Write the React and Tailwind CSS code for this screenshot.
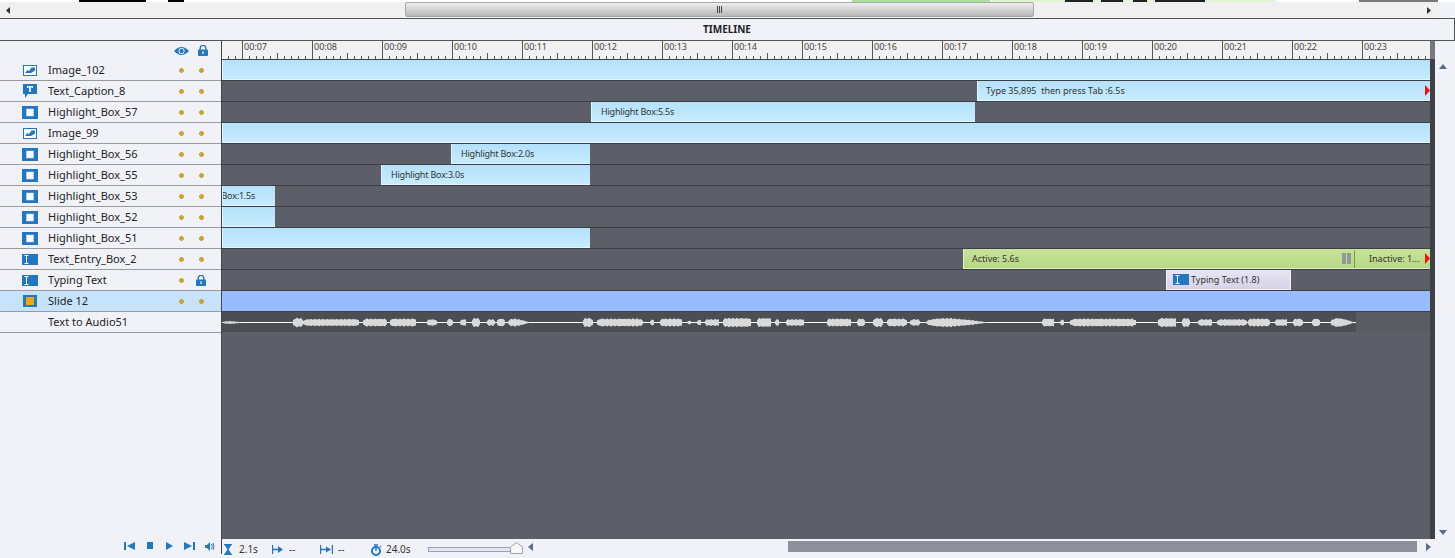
import React from 'react';

const BLUE = '#2277c2';

const LAYERS = [
  { name: 'Image_102', icon: 'image' },
  { name: 'Text_Caption_8', icon: 'caption' },
  { name: 'Highlight_Box_57', icon: 'box' },
  { name: 'Image_99', icon: 'image' },
  { name: 'Highlight_Box_56', icon: 'box' },
  { name: 'Highlight_Box_55', icon: 'box' },
  { name: 'Highlight_Box_53', icon: 'box' },
  { name: 'Highlight_Box_52', icon: 'box' },
  { name: 'Highlight_Box_51', icon: 'box' },
  { name: 'Text_Entry_Box_2', icon: 'entry' },
  { name: 'Typing Text', icon: 'entry', locked: true },
  { name: 'Slide 12', icon: 'slide', selected: true },
];

const BAR = 'relative h-[20px] shrink-0 overflow-hidden whitespace-nowrap border-l border-b border-[#e4f5ff] bg-gradient-to-b from-[#b4e1fa] to-[#c6ebfe] text-[9px] leading-[19px] text-[#333]';

// [start, end, half height] in px from the left of the audio clip
const WAVE = [
  [0, 21, 1.5, 1], [71, 81, 5], [81, 138, 3.8], [141, 165, 4.2], [168, 195, 4.2], [205, 215, 3.5], [225, 231, 4],
  [238, 245, 3.5], [250, 258, 4.8], [265, 273, 3.6], [275, 283, 4.2], [285, 308, 4.2, 1], [361, 371, 4.8], [375, 421, 4.2],
  [428, 433, 3], [438, 461, 4.2], [465, 470, 1.8], [475, 480, 3], [483, 498, 3.6], [501, 530, 4.8], [535, 550, 4.8],
  [553, 558, 3.6], [564, 583, 3.6], [605, 630, 4.2], [635, 643, 4.2], [651, 661, 4.8], [665, 685, 4.2], [688, 698, 3.6],
  [703, 768, 4.8, 1], [820, 833, 4.2], [838, 843, 3], [848, 915, 4.2], [936, 955, 4.8], [960, 968, 4.8], [976, 991, 3.6],
  [995, 1025, 3.6], [1026, 1048, 4.2], [1053, 1066, 3.6], [1071, 1081, 4.2], [1090, 1098, 4.2], [1108, 1133, 4.8, 1],
];

function wavePath() {
  return WAVE.map(([a, b, h, taper]) => {
    const top = [];
    const bottom = [];
    for (let x = a; x <= b; x += 2) {
      const t = (x - a) / (b - a);
      const edge = taper ? Math.sin(Math.PI * Math.pow(t, 0.6)) : Math.min(1, Math.min(t, 1 - t) * 8 + 0.5);
      const r = h * edge * (0.85 + 0.15 * Math.sin(x * 1.7));
      top.push(`${x},${(10.5 - r).toFixed(1)}`);
      bottom.unshift(`${x},${(10.5 + r).toFixed(1)}`);
    }
    return `M${top.join(' L')} L${bottom.join(' L')} Z`;
  }).join(' ');
}

function LayerIcon({ type }) {
  if (type === 'image') {
    return (
      <svg width="14" height="11" viewBox="0 0 14 11">
        <rect width="14" height="11" fill={BLUE} />
        <rect x="1" y="1" width="12" height="9" fill="#fff" />
        <path d="M2 8 L4.5 5 L6 6 L8.5 2.5 L12 2.5 V5.5 L8 8 Z" fill={BLUE} />
      </svg>
    );
  }
  if (type === 'caption') {
    return (
      <svg width="14" height="14" viewBox="0 0 14 14">
        <path d="M0 0 H14 V10 H5 L2 14 V10 H0 Z" fill={BLUE} />
        <path d="M4 2 H10 V4 H9 V3.4 H7.8 V8 H6.2 V3.4 H5 V4 H4 Z" fill="#fff" />
      </svg>
    );
  }
  if (type === 'box') {
    return (
      <svg width="16" height="13" viewBox="0 0 16 13">
        <rect width="16" height="13" fill={BLUE} />
        <rect x="4.5" y="3" width="7" height="7" fill="#fff" stroke="#cfe3f5" strokeDasharray="1 1" />
      </svg>
    );
  }
  if (type === 'entry') {
    return (
      <svg width="16" height="11" viewBox="0 0 16 11">
        <rect width="16" height="11" fill={BLUE} />
        <path d="M2.5 1.5 H6.5 M2.5 9.5 H6.5 M4.5 1.5 V9.5" stroke="#fff" strokeWidth="1" fill="none" />
      </svg>
    );
  }
  return (
    <svg width="14" height="12" viewBox="0 0 14 12">
      <rect width="14" height="12" fill={BLUE} />
      <rect x="3" y="2" width="8" height="8" fill="#eaa80c" />
    </svg>
  );
}

function Lock({ className = '' }) {
  return (
    <svg width="10" height="11" viewBox="0 0 10 11" className={className}>
      <path d="M2.2 5 V3.2 a2.8 2.8 0 0 1 5.6 0 V5" fill="none" stroke={BLUE} strokeWidth="1.4" />
      <rect y="4.6" width="10" height="6.4" rx="1" fill={BLUE} />
      <rect x="4.4" y="6.4" width="1.2" height="2.6" fill="#fff" />
    </svg>
  );
}

function Dot() {
  return <span className="block h-[5px] w-[5px] rounded-full border border-[#b8a045] bg-[#d9a21b]" />;
}

function LayerRow({ layer }) {
  return (
    <div className={`flex h-[21px] shrink-0 items-center border-b border-[#9b9b9b] ${layer.selected ? 'bg-[#c5e3fb]' : ''}`}>
      <div className="flex w-[48px] shrink-0 pl-[22px]">
        <div className="flex w-[16px] justify-center">
          {layer.icon && <LayerIcon type={layer.icon} />}
        </div>
      </div>
      <span className="w-[131px] shrink-0 text-[11px] text-[#222]">{layer.name}</span>
      {layer.icon && (
        <div className="flex items-center">
          <Dot />
          <div className="flex w-[20px] shrink-0 justify-end">
            {layer.locked ? <Lock className="-mr-[2px]" /> : <Dot />}
          </div>
        </div>
      )}
    </div>
  );
}

function RulerSecond({ label, width = 'w-[70px]' }) {
  return (
    <div className={`relative h-[18px] shrink-0 overflow-hidden ${width}`}>
      <svg width="70" height="18" className="absolute bottom-0 right-0">
        <path
          d="M.5 0 V18 M7.5 15 V18 M14.5 15 V18 M21.5 15 V18 M28.5 15 V18 M35.5 12 V18 M42.5 15 V18 M49.5 15 V18 M56.5 15 V18 M63.5 15 V18"
          stroke="#555"
          strokeWidth="1"
        />
      </svg>
      {label && <span className="absolute left-[2px] top-0 text-[9px] leading-[12px] text-[#444]">{label}</span>}
    </div>
  );
}

function RedFlag() {
  return (
    <svg width="5" height="11" viewBox="0 0 5 11" className="absolute right-0 top-[4px]">
      <path d="M0 0 L5 5.5 L0 11 Z" fill="#f01010" />
    </svg>
  );
}

function Track({ children, dark }) {
  return <div className={`flex h-[21px] shrink-0 border-b ${dark ? 'border-[#5f6168]' : 'border-[#3d3f45]'}`}>{children}</div>;
}

function Timeline() {
  return (
    <div className="flex w-[1208px] shrink-0 flex-col overflow-hidden bg-[#5c5f67]">
      <div className="flex h-[19px] shrink-0 border-b border-[#444] bg-[#f1f1f2]">
        <RulerSecond width="w-[20px]" />
        {['00:07', '00:08', '00:09', '00:10', '00:11', '00:12', '00:13', '00:14', '00:15', '00:16', '00:17', '00:18', '00:19', '00:20', '00:21', '00:22', '00:23'].map((t) => (
          <RulerSecond key={t} label={t} />
        ))}
      </div>
      <Track><div className={`${BAR} w-full`} /></Track>
      <Track>
        <div className={`${BAR} ml-[755px] w-[453px] pl-[8px]`}>
          Type 35,895&nbsp; then press Tab :6.5s
          <RedFlag />
        </div>
      </Track>
      <Track><div className={`${BAR} ml-[369px] w-[384px] pl-[9px] tracking-[-0.2px]`}>Highlight Box:5.5s</div></Track>
      <Track><div className={`${BAR} w-full`} /></Track>
      <Track><div className={`${BAR} ml-[229px] w-[139px] pl-[9px] tracking-[-0.2px]`}>Highlight Box:2.0s</div></Track>
      <Track><div className={`${BAR} ml-[159px] w-[209px] pl-[9px] tracking-[-0.2px]`}>Highlight Box:3.0s</div></Track>
      <Track>
        <div className={`${BAR} w-[53px] tracking-[-0.2px]`}>
          <span className="-ml-[41px] block">Highlight Box:1.5s</span>
        </div>
      </Track>
      <Track><div className={`${BAR} w-[53px]`} /></Track>
      <Track><div className={`${BAR} w-[368px]`} /></Track>
      <Track>
        <div className="relative ml-[741px] flex h-[20px] w-[467px] shrink-0 items-center border-l border-b border-[#e3f0cf] bg-gradient-to-b from-[#c8e29b] to-[#b6d982] text-[9px] text-[#333]">
          <span className="w-[378px] shrink-0 pl-[8px]">Active: 5.6s</span>
          <span className="flex w-[9px] shrink-0 justify-between">
            <span className="h-[11px] w-[4px] bg-[#8f9a96]" />
            <span className="h-[11px] w-[4px] bg-[#8f9a96]" />
          </span>
          <span className="ml-[3px] mr-[14px] h-[18px] w-px shrink-0 bg-[#6f9a4f]" />
          <span>Inactive: 1...</span>
          <RedFlag />
        </div>
      </Track>
      <Track>
        <div className="ml-[944px] flex h-[20px] w-[125px] shrink-0 items-center border-x border-b border-[#f3f2fa] bg-gradient-to-b from-[#e8e6f4] to-[#d5d3e5] pl-[6px] text-[9px] text-[#333]">
          <span className="mr-[2px] flex"><LayerIcon type="entry" /></span>
          Typing Text (1.8)
        </div>
      </Track>
      <Track><div className="h-[20px] w-full bg-[#99bbff]" /></Track>
      <Track dark>
        <svg width="1134" height="20" viewBox="0 0 1134 20" className="shrink-0 bg-[#4c4e53]">
          <rect y="10" width="1134" height="1" fill="#fff" />
          <path d={wavePath()} fill="#d9d9d9" />
        </svg>
        <div className="mt-px h-[19px] flex-1 bg-[#5a5c62]" />
      </Track>
    </div>
  );
}

function TopScrollbar() {
  return (
    <div className="flex h-[16px] shrink-0 items-center">
      <div className="flex h-full w-[405px] shrink-0 items-center bg-[#f0f0f0] pl-[6px]">
        <svg width="4" height="7" viewBox="0 0 4 7"><path d="M4 0 L0 3.5 L4 7 Z" fill="#333" /></svg>
      </div>
      <div className="flex h-[15px] w-[629px] shrink-0 items-center justify-center self-start rounded-[2px] border border-[#a8a8a8] bg-gradient-to-b from-[#eeeeee] to-[#b9b9b9]">
        <span className="flex gap-[1px]">
          <span className="h-[7px] w-px bg-[#444]" />
          <span className="h-[7px] w-px bg-[#444]" />
          <span className="h-[7px] w-px bg-[#444]" />
        </span>
      </div>
      <div className="flex h-full w-[404px] shrink-0 items-center justify-end bg-[#f0f0f0] pr-[7px]">
        <svg width="4" height="7" viewBox="0 0 4 7"><path d="M0 0 L4 3.5 L0 7 Z" fill="#333" /></svg>
      </div>
    </div>
  );
}

function TopStrip() {
  return (
    <div className="flex h-[2px] shrink-0 bg-white">
      <div className="ml-[79px] w-[67px] bg-black" />
      <div className="ml-[22px] w-[16px] bg-black" />
      <div className="ml-[668px] w-[138px] bg-[#a9e39a]" />
      <div className="ml-[2px] flex w-[284px] bg-[#dff4d0] pl-[73px]">
        <span className="w-[28px] bg-[#222]" />
        <span className="ml-[8px] w-[22px] bg-[#222]" />
        <span className="ml-[10px] w-[14px] bg-[#222]" />
        <span className="ml-[8px] w-[50px] bg-[#222]" />
      </div>
      <div className="ml-[83px] w-[79px] bg-[#777]" />
    </div>
  );
}

function BottomBar() {
  return (
    <div className="flex h-[19px] shrink-0 items-start">
      <div className="flex h-[15px] w-[222px] shrink-0 items-start border-r border-[#444] pl-[124px] pt-[3px]">
        <svg width="11" height="8" viewBox="0 0 11 8" className="mr-[12px]"><path d="M0 0 H2 V8 H0 Z M11 0 V8 L3 4 Z" fill={BLUE} /></svg>
        <svg width="6" height="7" viewBox="0 0 6 7" className="mr-[13px]"><rect width="6" height="7" fill={BLUE} /></svg>
        <svg width="7" height="8" viewBox="0 0 7 8" className="mr-[11px]"><path d="M0 0 L7 4 L0 8 Z" fill={BLUE} /></svg>
        <svg width="11" height="8" viewBox="0 0 11 8" className="mr-[10px]"><path d="M0 0 L8 4 L0 8 Z M9 0 H11 V8 H9 Z" fill={BLUE} /></svg>
        <svg width="10" height="9" viewBox="0 0 10 9"><path d="M0 3 H2 L5 0 V9 L2 6 H0 Z" fill={BLUE} /><path d="M6.5 2 Q8 4.5 6.5 7 M8 1 Q10 4.5 8 8" fill="none" stroke={BLUE} /></svg>
      </div>
      <div className="flex h-[19px] items-center pl-[2px] pt-[2px] text-[10px] text-[#333]">
        <svg width="8" height="11" viewBox="0 0 8 11" className="mr-[7px]"><path d="M0 .5 H8 M0 10.5 H8 M1 1 L4 5.5 L1 10 H7 L4 5.5 L7 1 Z" fill={BLUE} stroke={BLUE} /></svg>
        <span className="w-[33px]">2.1s</span>
        <svg width="12" height="9" viewBox="0 0 12 9" className="mr-[5px]"><path d="M.5 0 V9 M1 4.5 H7" stroke={BLUE} strokeWidth="1.4" /><path d="M6 1 L11 4.5 L6 8 Z" fill={BLUE} /></svg>
        <span className="w-[31px]">--</span>
        <svg width="13" height="9" viewBox="0 0 13 9" className="mr-[5px]"><path d="M.5 0 V9 M12.5 0 V9 M1 4.5 H7" stroke={BLUE} strokeWidth="1.4" /><path d="M6 1.5 L11 4.5 L6 7.5 Z" fill={BLUE} /></svg>
        <span className="w-[32px]">--</span>
        <svg width="12" height="12" viewBox="0 0 12 12" className="mr-[4px]"><circle cx="6" cy="7" r="4" fill="none" stroke={BLUE} strokeWidth="2" /><path d="M4 1 H8 M6 3 V7 M10 2 L11 3" stroke={BLUE} strokeWidth="1.4" /></svg>
        <span className="w-[42px]">24.0s</span>
        <div className="h-[5px] w-[83px] border border-[#9aa0b5] bg-[#e4e5ee]" />
        <svg width="13" height="12" viewBox="0 0 13 12" className="-ml-[1px] -mt-[4px]"><path d="M.5 11.5 V5 L6.5 .5 L12.5 5 V11.5 Z" fill="#f8f8f8" stroke="#a0a0a8" /></svg>
        <svg width="5" height="8" viewBox="0 0 5 8" className="-mt-[6px] ml-[5px]"><path d="M5 0 L0 4 L5 8 Z" fill="#5b6a8c" /></svg>
      </div>
      <div className="ml-[255px] mt-[2px] h-[11px] w-[629px] shrink-0 bg-[#8e919c]" />
      <svg width="5" height="8" viewBox="0 0 5 8" className="ml-[9px] mt-[4px] shrink-0"><path d="M0 0 L5 4 L0 8 Z" fill="#5b6a8c" /></svg>
    </div>
  );
}

function App() {
  return (
    <div className="flex h-[558px] w-[1455px] flex-col overflow-hidden bg-[#f1f2f8] font-['Noto_Sans',sans-serif]">
      <TopStrip />
      <TopScrollbar />
      <div className="flex h-[23px] w-[1455px] shrink-0 items-center justify-center border-y border-r border-y-[#555] border-r-[#555] text-[10px] font-bold text-[#222]">
        TIMELINE
      </div>
      <div className="flex h-[498px] shrink-0">
        <div className="flex w-[222px] shrink-0 flex-col border-r border-[#444]">
          <div className="flex h-[19px] shrink-0 items-center pl-[174px]">
            <svg width="15" height="10" viewBox="0 0 15 10" className="mr-[9px]">
              <path d="M0 5 Q7.5 -3 15 5 Q7.5 13 0 5 Z" fill={BLUE} />
              <circle cx="7.5" cy="5" r="3" fill="#fff" />
              <circle cx="7.5" cy="5" r="2.2" fill={BLUE} />
            </svg>
            <Lock />
          </div>
          {LAYERS.map((layer) => (
            <LayerRow key={layer.name} layer={layer} />
          ))}
          <LayerRow layer={{ name: 'Text to Audio51' }} />
        </div>
        <Timeline />
        <div className="flex w-[5px] shrink-0 flex-col bg-[#3f4147]">
          <div className="h-[18px] bg-[#77797f]" />
        </div>
        <div className="flex flex-1 flex-col items-center justify-between pb-[4px] pr-[4px] pt-[23px]">
          <svg width="8" height="5" viewBox="0 0 8 5"><path d="M4 0 L8 5 H0 Z" fill="#5b6a8c" /></svg>
          <svg width="8" height="5" viewBox="0 0 8 5"><path d="M0 0 H8 L4 5 Z" fill="#5b6a8c" /></svg>
        </div>
      </div>
      <BottomBar />
    </div>
  );
}

export default App;
